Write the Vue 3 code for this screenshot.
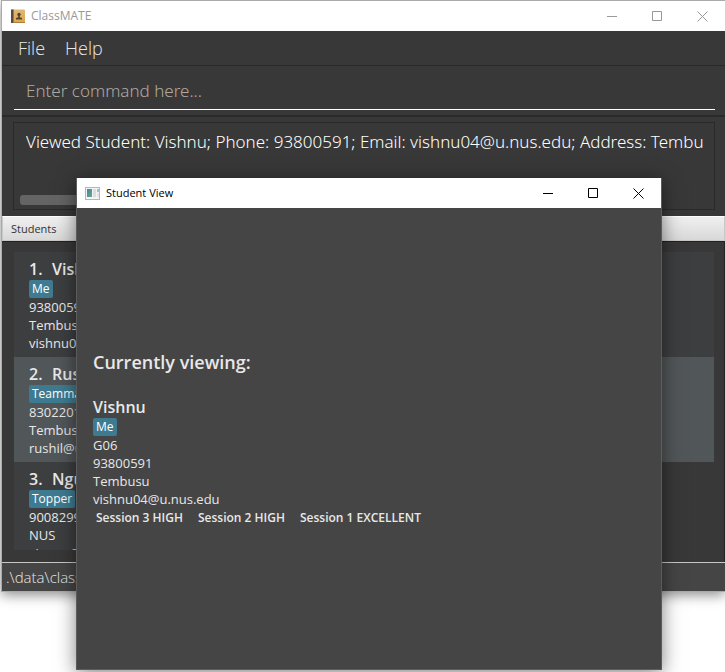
<script setup>
import { ref } from 'vue'

const command = ref('')
const result =
  'Viewed Student: Vishnu; Phone: 93800591; Email: vishnu04@u.nus.edu; Address: Tembu'

const students = [
  { id: 1, name: 'Vishnu', tag: 'Me', phone: '93800591', address: 'Tembusu', email: 'vishnu04@u.nus.edu' },
  { id: 2, name: 'Rushil', tag: 'Teammate', phone: '83022015', address: 'Tembusu', email: 'rushil@u.nus.edu' },
  { id: 3, name: 'Nguyen', tag: 'Topper', phone: '90082994', address: 'NUS', email: 'vinsun@u.nus.edu' }
]

const viewed = {
  name: 'Vishnu',
  tag: 'Me',
  details: ['G06', '93800591', 'Tembusu', 'vishnu04@u.nus.edu'],
  sessions: ['Session 3 HIGH', 'Session 2 HIGH', 'Session 1 EXCELLENT']
}
</script>

<template>
  <div class="desktop">
    <main class="window main-window">
      <header class="titlebar inactive">
        <svg class="app-icon" viewBox="0 0 15 15" aria-hidden="true">
          <defs>
            <linearGradient id="cover" x1="0" y1="0" x2="0" y2="1">
              <stop offset="0" stop-color="#dcb878" />
              <stop offset="1" stop-color="#dda646" />
            </linearGradient>
          </defs>
          <rect x="0" y="0.5" width="14" height="13.5" rx="1" fill="url(#cover)" />
          <rect x="0" y="0.5" width="2" height="13.5" fill="#5a4a44" />
          <rect x="2" y="0.5" width="1" height="13.5" fill="#9a7848" />
          <rect x="3" y="13" width="11" height="1" fill="#a8803c" />
          <circle cx="8" cy="5.5" r="1.7" fill="#54442f" />
          <path d="M7.2 6.5h1.6v1.8l2.2.7v1.5H5V9l2.2-.7z" fill="#54442f" />
        </svg>
        <span class="title">ClassMATE</span>
        <div class="controls">
          <button type="button" aria-label="Minimize"><svg viewBox="0 0 11 11"><path d="M0 5.5h10" /></svg></button>
          <button type="button" aria-label="Maximize"><svg viewBox="0 0 11 11"><path d="M.5.5h9v9h-9z" /></svg></button>
          <button type="button" aria-label="Close"><svg viewBox="0 0 11 11"><path d="M.5.5l10 10M10.5.5l-10 10" /></svg></button>
        </div>
      </header>

      <nav class="menubar">
        <button type="button">File</button>
        <button type="button">Help</button>
      </nav>

      <form class="command" @submit.prevent>
        <input v-model="command" type="text" aria-label="Command" placeholder="Enter command here..." />
      </form>

      <section class="result">
        <div class="result-box">
          <p>{{ result }}</p>
          <div class="scroll-thumb"></div>
        </div>
      </section>

      <h2 class="pane-header">Students</h2>
      <section class="list-pane">
        <ul class="list">
          <li v-for="s in students" :key="s.id" class="card">
            <h3><span class="index">{{ s.id }}.</span>{{ s.name }}</h3>
            <div class="tags"><span class="tag">{{ s.tag }}</span></div>
            <p>{{ s.phone }}</p>
            <p>{{ s.address }}</p>
            <p>{{ s.email }}</p>
          </li>
        </ul>
      </section>

      <footer class="status">.\data\classmate.json</footer>
    </main>

    <section class="window student-window" role="dialog" aria-labelledby="student-title">
      <header class="titlebar">
        <svg class="app-icon" viewBox="0 0 15 15" aria-hidden="true">
          <defs>
            <linearGradient id="pane" x1="0" y1="0" x2="1" y2="1">
              <stop offset="0" stop-color="#4d7fa8" />
              <stop offset="1" stop-color="#5fae80" />
            </linearGradient>
          </defs>
          <rect x=".5" y="1.5" width="14" height="12" fill="#f4f4f4" stroke="#b4b8bc" />
          <rect x="2" y="3" width="5" height="8" fill="url(#pane)" />
          <rect x="8" y="3" width="3" height="8" fill="#dcdde2" />
          <rect x="12" y="3" width="2" height="3" fill="#9cc4b8" />
          <rect x="12" y="7" width="2" height="4" fill="#e2e4e6" />
        </svg>
        <span id="student-title" class="title">Student View</span>
        <div class="controls">
          <button type="button" aria-label="Minimize"><svg viewBox="0 0 11 11"><path d="M0 5.5h10" /></svg></button>
          <button type="button" aria-label="Maximize"><svg viewBox="0 0 11 11"><path d="M.5.5h9v9h-9z" /></svg></button>
          <button type="button" aria-label="Close"><svg viewBox="0 0 11 11"><path d="M.5.5l10 10M10.5.5l-10 10" /></svg></button>
        </div>
      </header>
      <div class="student">
        <h2>Currently viewing:</h2>
        <h3>{{ viewed.name }}</h3>
        <div class="tags"><span class="tag">{{ viewed.tag }}</span></div>
        <p v-for="d in viewed.details" :key="d">{{ d }}</p>
        <div class="sessions">
          <span v-for="s in viewed.sessions" :key="s">{{ s }}</span>
        </div>
      </div>
    </section>
  </div>
</template>

<style>
body {
  margin: 0;
  background: #fff;
}
</style>

<style scoped>
.desktop {
  position: relative;
  min-height: 100vh;
  overflow: hidden;
  font-family: "Open Sans", "Noto Sans", sans-serif;
  color: #e8e8e8;
}
h2, h3, p, ul {
  margin: 0;
  padding: 0;
}
button {
  border: 0;
  background: none;
  color: inherit;
  font: inherit;
}
.window {
  box-sizing: border-box;
}
.main-window {
  margin-left: 1px;
  border: 1px solid #aaa;
  border-right: 0;
  background: #383838;
  box-shadow: 0 3px 12px rgba(0, 0, 0, 0.45);
}
.titlebar {
  display: flex;
  align-items: center;
  height: 30px;
  padding-left: 8px;
  background: #fff;
  color: #000;
  font-size: 11px;
  line-height: 16px;
}
.inactive {
  padding-left: 9px;
  color: #999;
  font-size: 12px;
}
.app-icon {
  width: 15px;
  height: 15px;
}
.title {
  flex: 1;
  padding-left: 6px;
}
.inactive .title {
  padding-left: 5px;
}
.controls {
  display: flex;
}
.controls button {
  display: grid;
  place-items: center;
  width: 45px;
  height: 30px;
  padding: 0;
}
.controls svg {
  width: 11px;
  height: 11px;
  fill: none;
  stroke: currentColor;
  stroke-width: 1;
}
.menubar {
  display: flex;
  box-sizing: border-box;
  height: 35px;
  padding-left: 8px;
  gap: 4px;
  border-bottom: 1px solid #282828;
  font-size: 18px;
  font-weight: 300;
}
.menubar button {
  padding: 0 8px;
}
.command {
  padding: 5px 10px 5px 12px;
  border-bottom: 2px solid #2a2a2a;
}
.command input {
  display: block;
  box-sizing: border-box;
  width: 100%;
  height: 39px;
  padding: 0 12px;
  border: 0;
  border-bottom: 1px solid #fff;
  outline: 0;
  background: transparent;
  color: #fff;
  font: 300 17px/24px "Noto Sans", sans-serif;
}
.command input::placeholder {
  color: #b0a8a0;
  opacity: 1;
}
.result {
  padding: 5px 10px 6px 11px;
}
.result-box {
  display: flex;
  flex-direction: column;
  justify-content: space-between;
  box-sizing: border-box;
  height: 88px;
  padding: 7px 2px 4px 6px;
  border: 1px solid #2a2a2a;
}
.result-box p {
  margin-left: 6px;
  overflow: hidden;
  white-space: nowrap;
  color: #fff;
  font: 300 17px/24px "Noto Sans", sans-serif;
}
.scroll-thumb {
  width: 80%;
  height: 10px;
  border-radius: 3px;
  background: #646464;
}
.pane-header {
  box-sizing: border-box;
  height: 25px;
  padding-left: 8px;
  border: 1px solid #c8c8c8;
  border-top-color: #fff;
  background: linear-gradient(#f0f0f0, #d8d8d8);
  color: #333;
  font-size: 11px;
  font-weight: 400;
  line-height: 23px;
}
.list-pane {
  padding: 10px 10px 12px 12px;
  border-top: 1px solid #222;
  border-right: 1px solid #222;
}
.list {
  height: 298px;
  overflow: hidden;
  list-style: none;
}
.card {
  padding: 6px 15px 5px;
  background: #3c3e3f;
}
.card:nth-child(even) {
  background: #515658;
}
.card:last-child {
  background: linear-gradient(to right, #3c3e3f 50%, transparent 50%);
}
h3 {
  font-size: 16px;
  font-weight: 600;
  line-height: 22px;
}
.index {
  display: inline-block;
  width: 23px;
}
.tags {
  display: flex;
}
.tag {
  padding: 0 3px;
  border-radius: 2px;
  background: #3e7b91;
  color: #fff;
  font-size: 12px;
  line-height: 18px;
}
.card p, .student p {
  font-size: 13px;
  line-height: 18px;
}
.status {
  padding-left: 4px;
  border-top: 1px solid #c8c8c8;
  background: #454545;
  font-size: 15px;
  font-weight: 300;
  line-height: 28px;
}
.student-window {
  position: absolute;
  top: 178px;
  left: 76px;
  right: 63px;
  display: flex;
  flex-direction: column;
  height: 492px;
  border: 1px solid #5c5c5c;
  border-top: 0;
  background: #454545;
  box-shadow: 0 3px 18px rgba(0, 0, 0, 0.5);
}
.student {
  display: flex;
  flex: 1;
  flex-direction: column;
  justify-content: center;
  padding: 0 16px;
}
.student h2 {
  margin-bottom: 21px;
  font-size: 18px;
  font-weight: 600;
  line-height: 25px;
}
.sessions {
  display: flex;
  gap: 15px;
  padding-left: 3px;
  font-size: 12px;
  font-weight: 600;
  line-height: 20px;
}
</style>
